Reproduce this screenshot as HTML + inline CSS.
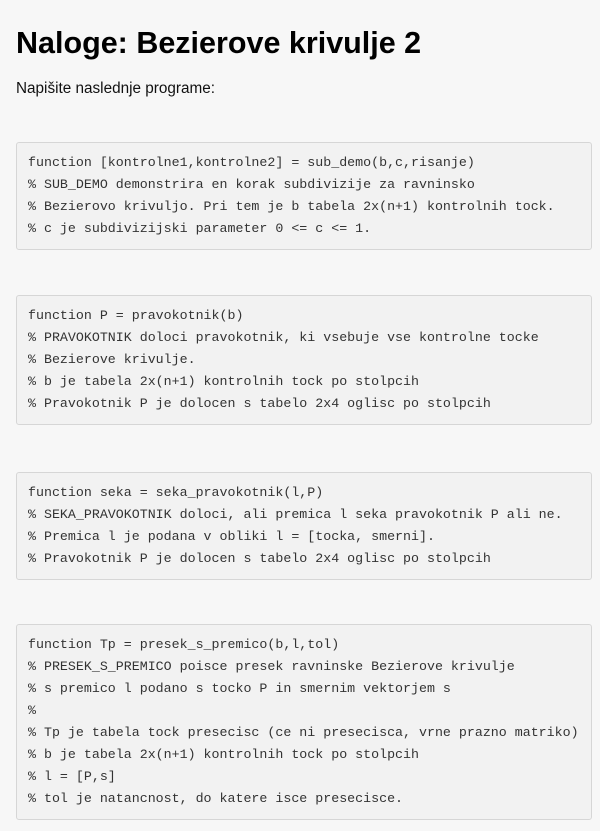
<!DOCTYPE html>
<html><head><meta charset="utf-8"><style>
html,body{margin:0;padding:0;background:#f7f7f7;}
body{width:600px;height:831px;overflow:hidden;font-family:"Liberation Sans",sans-serif;color:#000;}
h1{position:absolute;left:16px;top:24px;margin:0;font-size:30.5px;font-weight:bold;line-height:38px;}
p{position:absolute;left:16px;top:79px;margin:0;font-size:15.3px;line-height:20px;color:#111;}
pre{position:absolute;left:16px;width:552px;margin:0;padding:9px 11px 9px 11px;background:#f2f2f2;border:1px solid #d6d6d6;border-radius:3px;font-family:"Liberation Mono",monospace;font-size:13.3px;line-height:22px;color:#333;white-space:pre;}
</style></head><body>
<h1>Naloge: Bezierove krivulje 2</h1>
<p>Napišite naslednje programe:</p>
<pre style="top:142px">function [kontrolne1,kontrolne2] = sub_demo(b,c,risanje)
% SUB_DEMO demonstrira en korak subdivizije za ravninsko
% Bezierovo krivuljo. Pri tem je b tabela 2x(n+1) kontrolnih tock.
% c je subdivizijski parameter 0 &lt;= c &lt;= 1.</pre>
<pre style="top:295px">function P = pravokotnik(b)
% PRAVOKOTNIK doloci pravokotnik, ki vsebuje vse kontrolne tocke
% Bezierove krivulje.
% b je tabela 2x(n+1) kontrolnih tock po stolpcih
% Pravokotnik P je dolocen s tabelo 2x4 oglisc po stolpcih</pre>
<pre style="top:472px">function seka = seka_pravokotnik(l,P)
% SEKA_PRAVOKOTNIK doloci, ali premica l seka pravokotnik P ali ne.
% Premica l je podana v obliki l = [tocka, smerni].
% Pravokotnik P je dolocen s tabelo 2x4 oglisc po stolpcih</pre>
<pre style="top:624px">function Tp = presek_s_premico(b,l,tol)
% PRESEK_S_PREMICO poisce presek ravninske Bezierove krivulje
% s premico l podano s tocko P in smernim vektorjem s
%
% Tp je tabela tock presecisc (ce ni presecisca, vrne prazno matriko)
% b je tabela 2x(n+1) kontrolnih tock po stolpcih
% l = [P,s]
% tol je natancnost, do katere isce presecisce.</pre>
</body></html>
